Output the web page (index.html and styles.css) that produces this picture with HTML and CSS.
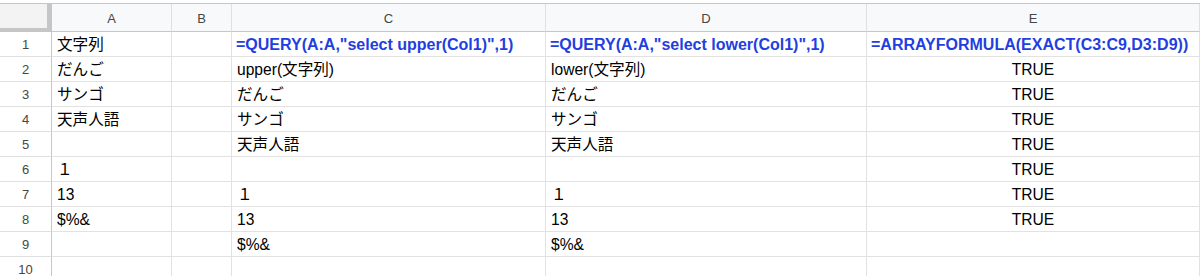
FILE: index.html
```html
<!DOCTYPE html>
<html lang="ja">
<head>
<meta charset="utf-8">
<title>Sheet</title>
<link rel="stylesheet" href="styles.css">
</head>
<body>
<div class="sheet">
  <div class="corner"></div>
  <div class="colhead">A</div>
  <div class="colhead">B</div>
  <div class="colhead">C</div>
  <div class="colhead">D</div>
  <div class="colhead">E</div>

  <div class="rowhead">1</div>
  <div class="cell">文字列</div>
  <div class="cell"></div>
  <div class="cell formula">=QUERY(A:A,"select upper(Col1)",1)</div>
  <div class="cell formula">=QUERY(A:A,"select lower(Col1)",1)</div>
  <div class="cell formula">=ARRAYFORMULA(EXACT(C3:C9,D3:D9))</div>

  <div class="rowhead">2</div>
  <div class="cell">だんご</div>
  <div class="cell"></div>
  <div class="cell">upper(文字列)</div>
  <div class="cell">lower(文字列)</div>
  <div class="cell center">TRUE</div>

  <div class="rowhead">3</div>
  <div class="cell">サンゴ</div>
  <div class="cell"></div>
  <div class="cell">だんご</div>
  <div class="cell">だんご</div>
  <div class="cell center">TRUE</div>

  <div class="rowhead">4</div>
  <div class="cell">天声人語</div>
  <div class="cell"></div>
  <div class="cell">サンゴ</div>
  <div class="cell">サンゴ</div>
  <div class="cell center">TRUE</div>

  <div class="rowhead">5</div>
  <div class="cell"></div>
  <div class="cell"></div>
  <div class="cell">天声人語</div>
  <div class="cell">天声人語</div>
  <div class="cell center">TRUE</div>

  <div class="rowhead">6</div>
  <div class="cell">１</div>
  <div class="cell"></div>
  <div class="cell"></div>
  <div class="cell"></div>
  <div class="cell center">TRUE</div>

  <div class="rowhead">7</div>
  <div class="cell">13</div>
  <div class="cell"></div>
  <div class="cell">１</div>
  <div class="cell">１</div>
  <div class="cell center">TRUE</div>

  <div class="rowhead">8</div>
  <div class="cell">$%&amp;</div>
  <div class="cell"></div>
  <div class="cell">13</div>
  <div class="cell">13</div>
  <div class="cell center">TRUE</div>

  <div class="rowhead">9</div>
  <div class="cell"></div>
  <div class="cell"></div>
  <div class="cell">$%&amp;</div>
  <div class="cell">$%&amp;</div>
  <div class="cell"></div>

  <div class="rowhead">10</div>
  <div class="cell"></div>
  <div class="cell"></div>
  <div class="cell"></div>
  <div class="cell"></div>
  <div class="cell"></div>
</div>
</body>
</html>
```

FILE: styles.css
```css
html, body {
  margin: 0;
  padding: 0;
  background: #ffffff;
}

body {
  padding-top: 3px;
  overflow: hidden;
}

.sheet {
  display: grid;
  grid-template-columns: 52px 120px 60px 314px 321px 333px;
  grid-template-rows: 28px repeat(10, 25px);
  border-top: 1px solid #c7c7c7;
  font-family: "Liberation Sans", Arial, "Noto Sans CJK JP", sans-serif;
}

.corner {
  background: #f3f3f3;
  border-right: 5px solid #c4c7c5;
  border-bottom: 4px solid #c4c7c5;
  box-sizing: border-box;
}

.colhead {
  background: #f8f9fa;
  border-right: 1px solid #e0e0e0;
  border-bottom: 1px solid #c7c7c7;
  display: flex;
  align-items: center;
  justify-content: center;
  color: #444746;
  font-size: 13px;
  padding-top: 1px;
  box-sizing: border-box;
}

.colhead:last-of-type {
  border-right: none;
}

.rowhead {
  background: #ffffff;
  border-right: 1px solid #c7c7c7;
  border-bottom: 1px solid #e0e0e0;
  display: flex;
  align-items: center;
  justify-content: center;
  color: #444746;
  font-size: 13px;
  padding-top: 1px;
  box-sizing: border-box;
}

.cell {
  border-right: 1px solid #e2e2e2;
  border-bottom: 1px solid #e2e2e2;
  box-sizing: border-box;
  padding: 1px 5px 0;
  font-size: 15.6px;
  line-height: 24px;
  color: #000000;
  white-space: nowrap;
  overflow: hidden;
}

.formula {
  font-weight: bold;
  font-size: 16px;
  color: #1f3fe0;
  padding-left: 4px;
}

.center {
  text-align: center;
}
```
